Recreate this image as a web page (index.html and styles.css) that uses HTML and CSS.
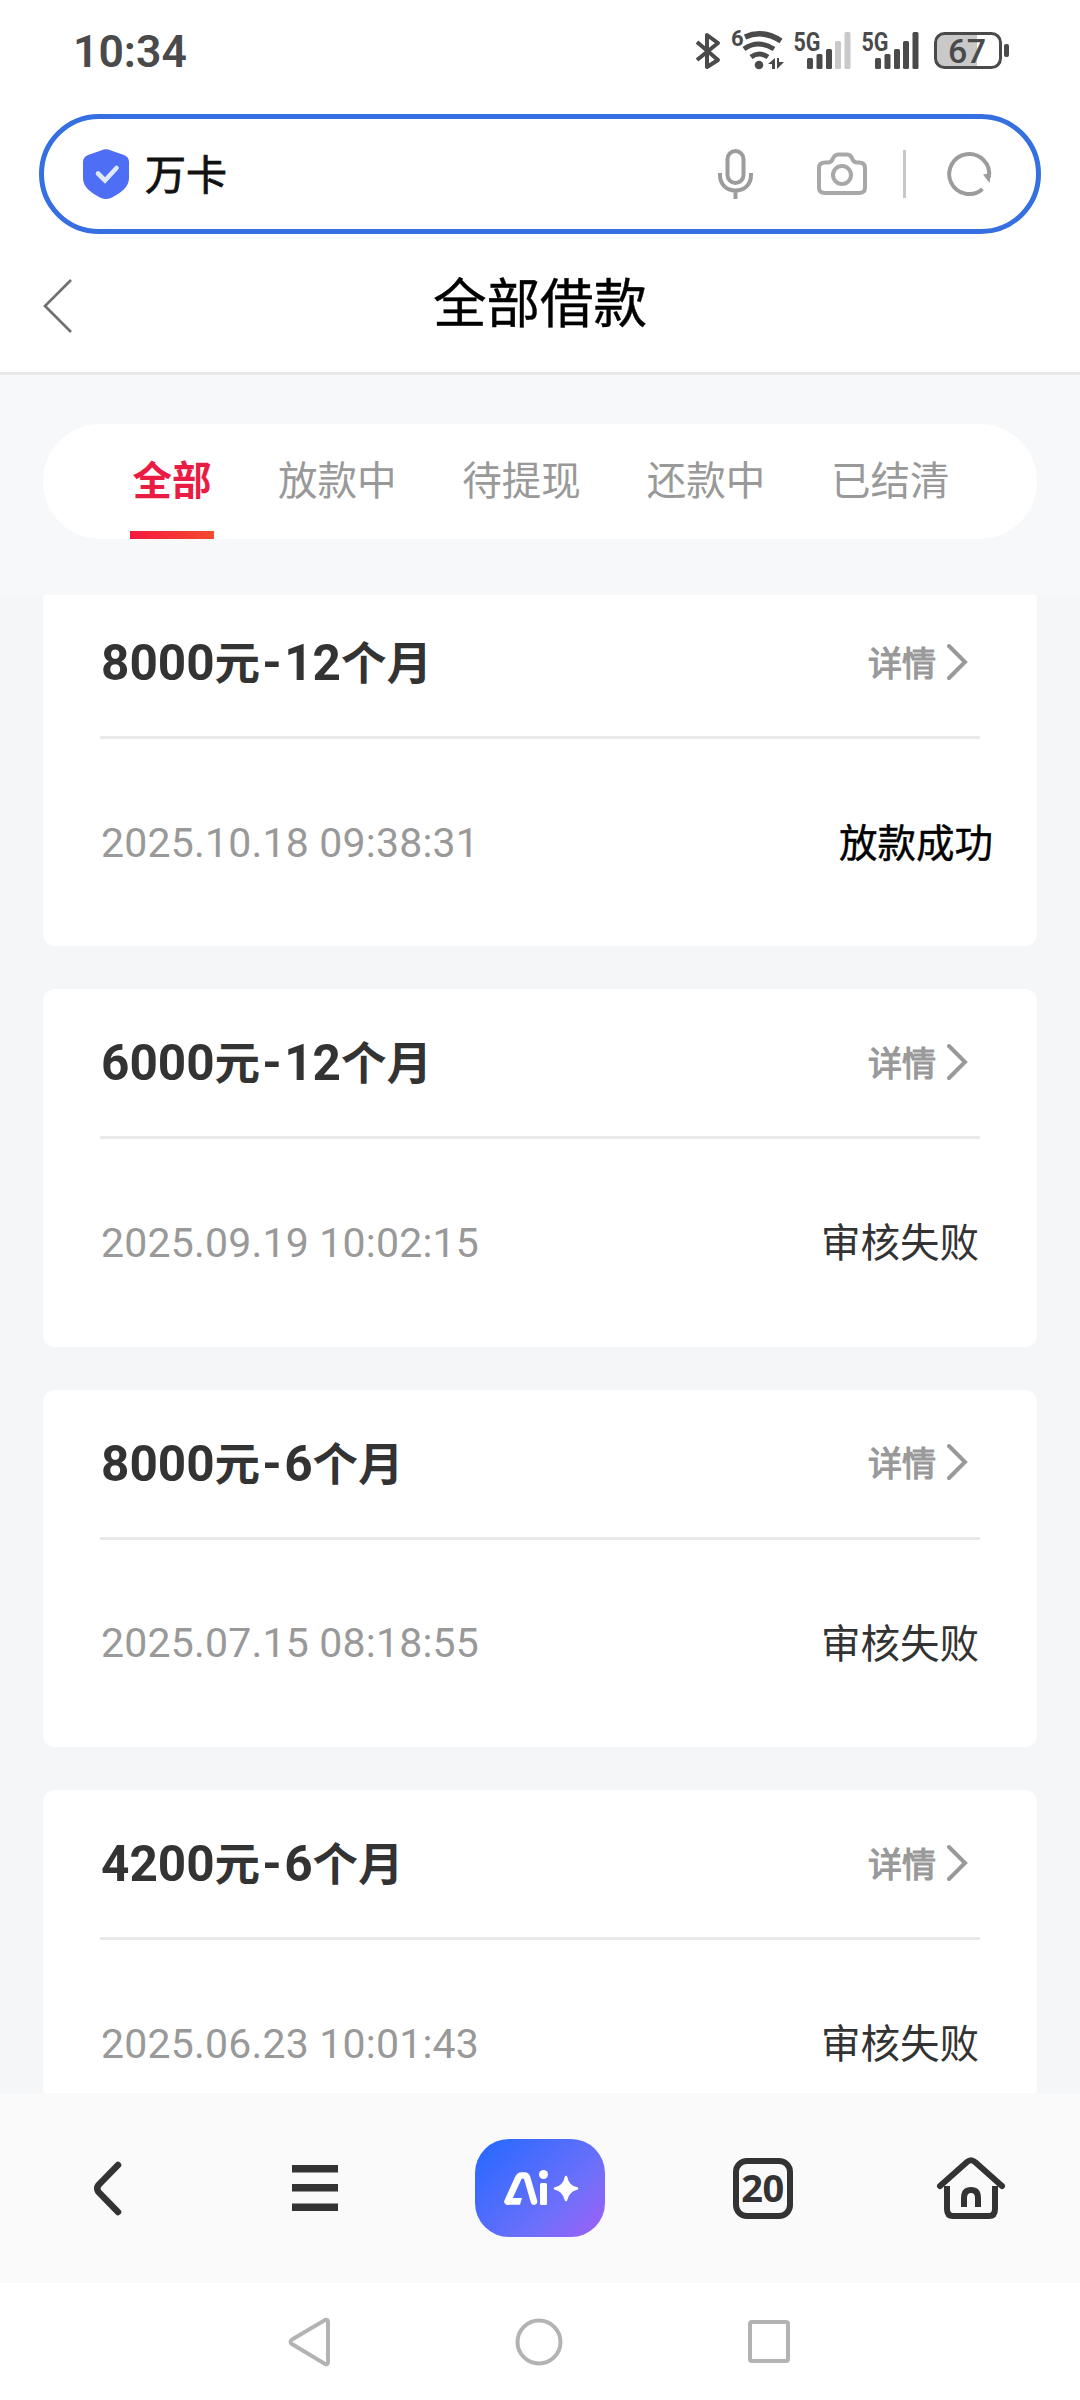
FILE: index.html
```html
<!DOCTYPE html>
<html lang="zh-CN">
<head>
<meta charset="utf-8">
<title>全部借款</title>
<link rel="stylesheet" href="styles.css">
</head>
<body>
<div class="screen">
  <header class="status-bar">
    <span class="clock">10:34</span>
    <svg class="status-icons" width="320" height="60" viewBox="692 20 320 60" fill="none" stroke="#4a4a4a">
      <path d="M697 42 718 60 707 67V35L718 43 697 60" stroke-width="4" stroke-linejoin="round"/>
      <text x="731" y="46" class="tiny">6</text>
      <g stroke-width="5">
        <path d="M745 37Q763 29 781 41" stroke-width="5.5"/>
        <path d="M744 49Q758 39 774 49"/>
        <path d="M751 57Q759 51 768 57"/>
      </g>
      <circle cx="759" cy="65" r="4.3" fill="#4a4a4a" stroke="none"/>
      <g fill="#4a4a4a" stroke="none">
        <path d="M768 64 775 58V69H772V64ZM777 58H779V62H784L777 69Z"/>
        <rect x="807" y="58" width="6" height="11" rx="1.5"/>
        <rect x="816.5" y="54" width="6" height="15" rx="1.5"/>
        <rect x="826" y="49" width="6" height="20" rx="1.5"/>
        <rect x="835" y="41" width="6" height="28" rx="1.5" fill="#c9c9c9"/>
        <rect x="844.5" y="32" width="6" height="37" rx="1.5" fill="#c9c9c9"/>
        <rect x="875" y="58" width="6" height="11" rx="1.5"/>
        <rect x="884.5" y="54" width="6" height="15" rx="1.5"/>
        <rect x="894" y="49" width="6" height="20" rx="1.5"/>
        <rect x="903" y="41" width="6" height="28" rx="1.5"/>
        <rect x="912.5" y="32" width="6" height="37" rx="1.5"/>
        <path d="M944 34H977V67H944Q936 67 936 58V43Q936 34 944 34Z" fill="#c9c9c9"/>
        <rect x="1004" y="44" width="5" height="13" rx="2"/>
      </g>
      <rect x="935.5" y="33.5" width="65" height="34" rx="9" stroke-width="3"/>
      <text x="793.5" y="50.5" class="net" textLength="27" lengthAdjust="spacingAndGlyphs">5G</text>
      <text x="861.5" y="50.5" class="net" textLength="27" lengthAdjust="spacingAndGlyphs">5G</text>
      <text x="948" y="63" class="level" textLength="38">67</text>
    </svg>
  </header>

  <div class="address-bar">
    <svg class="shield" width="46" height="50" viewBox="0 0 46 50">
      <path d="M18 1.5Q23-.8 28 1.5L41 6Q46 8 46 13V29C46 38 38 44 28 49Q23 51 18 49C8 44 0 38 0 29V13Q0 8 5 6Z" fill="#4d6ef5"/>
      <path d="m15 24.500 7 7L33.500 19" fill="none" stroke="#dfe8ff" stroke-width="4.6" stroke-linecap="round"/>
    </svg>
    <span class="site">万卡</span>
    <svg class="tools" width="280" height="56" viewBox="715 146 280 56" fill="none" stroke="#9c9c9c" stroke-width="4">
      <rect x="727.5" y="151" width="16" height="32" rx="8"/>
      <path d="M720 173V175C720 184 726 190.500 735.500 190.500S751 184 751 175V173M735.500 190V199"/>
      <path d="M825 162.500H828Q831 162.500 832.500 159.500 834.500 154.500 838 154.500H847Q851 154.500 852.500 159.500 854 162.500 857 162.500H859Q865 162.500 865 168V188Q865 193 859 193H825Q819 193 819 188V168Q819 162.500 825 162.500Z" stroke="#a8a8a8"/>
      <circle cx="842" cy="175" r="9" stroke="#a8a8a8"/>
      <path d="M904.500 150V198" stroke="#c8c8c8" stroke-width="3"/>
      <path d="M982.500 189A20 20 0 1 1 989 177"/>
      <path d="M983 174.500 991 173 989.500 183Z" fill="#9c9c9c" stroke="none"/>
    </svg>
  </div>

  <div class="page-header">
    <svg class="back" width="32" height="56" viewBox="0 0 32 56"><path d="M29 2 3 28 29 54" fill="none" stroke="#707070" stroke-width="2.7"/></svg>
    <h1>全部借款</h1>
  </div>

  <nav class="tabs">
    <span class="tab active">全部</span>
    <span class="tab">放款中</span>
    <span class="tab">待提现</span>
    <span class="tab">还款中</span>
    <span class="tab">已结清</span>
  </nav>

  <main class="list">
    <article class="card">
      <div class="card-head"><h2><b>8000</b>元<b class="dash">-</b><b>12</b>个月</h2><span class="detail">详情<svg width="22" height="38" viewBox="0 0 22 38"><path d="M2 3 18 19 2 35"/></svg></span></div>
      <div class="card-body"><time>2025.10.18 09:38:31</time><span class="state success">放款成功</span></div>
    </article>
    <article class="card">
      <div class="card-head"><h2><b>6000</b>元<b class="dash">-</b><b>12</b>个月</h2><span class="detail">详情<svg width="22" height="38" viewBox="0 0 22 38"><path d="M2 3 18 19 2 35"/></svg></span></div>
      <div class="card-body"><time>2025.09.19 10:02:15</time><span class="state">审核失败</span></div>
    </article>
    <article class="card">
      <div class="card-head"><h2><b>8000</b>元<b class="dash">-</b><b>6</b>个月</h2><span class="detail">详情<svg width="22" height="38" viewBox="0 0 22 38"><path d="M2 3 18 19 2 35"/></svg></span></div>
      <div class="card-body"><time>2025.07.15 08:18:55</time><span class="state">审核失败</span></div>
    </article>
    <article class="card">
      <div class="card-head"><h2><b>4200</b>元<b class="dash">-</b><b>6</b>个月</h2><span class="detail">详情<svg width="22" height="38" viewBox="0 0 22 38"><path d="M2 3 18 19 2 35"/></svg></span></div>
      <div class="card-body"><time>2025.06.23 10:01:43</time><span class="state">审核失败</span></div>
    </article>
  </main>

  <footer class="toolbar">
    <svg width="30" height="60" viewBox="0 0 30 60"><path d="M25 7 5.500 27Q3 30.500 5.500 34L25 54" fill="none" stroke="#333" stroke-width="6.5" stroke-linecap="round"/></svg>
    <svg class="menu" width="46" height="48" viewBox="0 0 46 48" fill="#333"><path d="M0 1H46V8.500H0ZM0 20H46V27.500H0ZM0 39.500H46V47H0Z"/></svg>
    <span class="ai">
      <svg width="78" height="40" viewBox="502 2168 78 40" fill="#fff">
        <path d="M508.500 2201.500 519.500 2177.500Q520.500 2175.500 522.500 2175.500H525.500Q527.500 2175.500 528 2177.500L535 2201.500" fill="none" stroke="#fff" stroke-width="6.6" stroke-linecap="round"/>
        <path d="M507 2204.800 509 2198H523L521 2204.800Z"/>
        <circle cx="544.5" cy="2174.5" r="4.5"/>
        <rect x="541" y="2183" width="7" height="22" rx="1.5"/>
        <path d="M567 2177Q569 2187 578 2188.500 569 2190.500 567 2200 565 2190.500 556 2188.500 565 2187 567 2177Z" stroke="#fff" stroke-width="2.5" stroke-linejoin="round"/>
      </svg>
    </span>
    <span class="count">20</span>
    <svg width="70" height="64" viewBox="936 2156 70 64" fill="none" stroke="#333" stroke-width="6">
      <path d="M940 2186 967 2162Q971 2158.500 975 2162L1002 2186" stroke-linecap="round"/>
      <path d="M947 2186V2209Q947 2216 953 2216H989Q995 2216 995 2209V2186"/>
      <path d="M964 2207V2198Q964 2190 971 2190T978 2198V2207"/>
    </svg>
  </footer>

  <div class="system-nav">
    <svg width="44" height="50" viewBox="0 0 44 50"><path d="M4 22.500 37 3Q40 2 40 5V45Q40 48 37 47L4 27Q1 25 4 22.500Z"/></svg>
    <svg width="50" height="50" viewBox="0 0 50 50"><circle cx="25" cy="25" r="21.5"/></svg>
    <svg width="46" height="46" viewBox="0 0 46 46"><rect x="4" y="3" width="38" height="39" rx="2"/></svg>
  </div>
</div>
</body>
</html>
```
FILE: styles.css
```css
* { box-sizing: border-box; }

body {
  margin: 0;
  background: #fff;
  font-family: "Noto Sans CJK SC", sans-serif;
}

svg { display: block; flex: none; }

h1, h2 { margin: 0; }

.screen {
  display: flex;
  flex-direction: column;
  width: 1080px;
  height: 2400px;
  overflow: hidden;
  background: #f7f8fa;
}

.status-bar {
  display: flex;
  flex: none;
  justify-content: space-between;
  align-items: flex-start;
  height: 114px;
  padding: 20px 68px 0 73px;
  background: #fff;
}

.clock {
  margin-top: 9px;
  font: 600 44.5px/46px Roboto, sans-serif;
  color: #4a4a4a;
}

.status-icons text {
  fill: #4a4a4a;
  stroke: none;
  font-family: Roboto, sans-serif;
  font-weight: 700;
}

.status-icons .tiny { font-size: 22px; }
.status-icons .net { font-size: 26px; }
.status-icons .level { font-size: 34px; font-weight: 500; }

.address-bar {
  display: flex;
  flex: none;
  align-items: center;
  height: 120px;
  margin: 0 39px;
  padding: 0 41px 0 39px;
  border: 5px solid #366fe2;
  border-radius: 60px;
  background: #fff;
  background-clip: padding-box;
  box-shadow: 0 0 0 200px #fff;
  clip-path: inset(0 -39px);
}

.site {
  margin: -4px 0 0 16px;
  font-size: 41px;
  line-height: 60px;
  color: #111;
  -webkit-text-stroke: 0.8px #111;
}

.tools { margin-left: auto; }

.page-header {
  display: grid;
  flex: none;
  grid-template-columns: 100px 1fr 100px;
  align-items: center;
  height: 141px;
  padding-bottom: 6px;
  border-bottom: 3px solid #e8e9ea;
  background: #fff;
}

.back { margin: 12px 0 0 42px; }

.page-header h1 {
  font-size: 53.5px;
  font-weight: 400;
  line-height: 80px;
  text-align: center;
  color: #000;
  -webkit-text-stroke: 0.4px #000;
}

.tabs {
  display: flex;
  flex: none;
  gap: 64.3px;
  height: 115px;
  margin: 49px 43px 56px;
  padding-left: 87px;
  border-radius: 58px;
  background: #fff;
}

.tab {
  width: 120px;
  font-size: 39.5px;
  line-height: 108px;
  text-align: center;
  white-space: nowrap;
  color: #999;
}

.tab.active {
  width: 84px;
  margin-right: -1px;
  border-bottom: 8px solid;
  border-image: linear-gradient(90deg, #f5173f, #f44b2e) 1;
  font-weight: 700;
  color: #ea1c43;
}

.list {
  display: flex;
  flex: 1;
  flex-direction: column;
  gap: 43px;
  min-height: 0;
  padding: 0 43px;
  overflow: hidden;
  background: #f5f6f8;
}

.card {
  flex: none;
  height: 357.5px;
  padding: 0 57px;
  border-radius: 12px;
  background: #fff;
}

.card:first-child {
  height: 351px;
  border-radius: 0 0 12px 12px;
}

.card-head {
  display: flex;
  justify-content: space-between;
  align-items: center;
  height: 150px;
  padding-bottom: 2px;
  border-bottom: 3px solid #e9e9e9;
}

.card:first-child .card-head { height: 144px; padding-bottom: 8px; }

.card h2 {
  display: flex;
  align-items: baseline;
  padding-left: 1px;
  font-size: 45.5px;
  font-weight: 700;
  line-height: 68px;
  color: #333;
}

.card h2 b {
  font-family: Roboto, sans-serif;
  font-size: 49.5px;
  font-weight: 700;
}

.card h2 .dash { width: 24px; text-align: center; }

.detail {
  display: flex;
  align-items: center;
  gap: 11px;
  margin-right: 11px;
  font-size: 34px;
  line-height: 50px;
  color: #999;
  -webkit-text-stroke: 1.2px #999;
}

.detail svg {
  fill: none;
  stroke: #999;
  stroke-width: 4;
  stroke-linecap: round;
}

.card-body {
  display: flex;
  justify-content: space-between;
  align-items: center;
  height: 207px;
}

time {
  padding-left: 1px;
  font-family: Roboto, sans-serif;
  font-size: 41px;
  letter-spacing: 0.2px;
  color: #999;
}

.state {
  margin: -5px 1px 0 0;
  font-size: 39.5px;
  line-height: 58px;
  color: #333;
}

.state.success {
  margin-right: -13px;
  font-size: 38.5px;
  color: #000;
  -webkit-text-stroke: 0.4px #000;
}

.toolbar {
  display: grid;
  flex: none;
  grid-template-columns: 216px 216px 216px 230px 186px;
  justify-items: center;
  align-items: center;
  height: 190px;
  background: #fafafa;
}

.menu { margin-left: -18px; }

.ai {
  display: flex;
  justify-content: center;
  align-items: center;
  width: 130px;
  height: 98px;
  margin-left: -1px;
  border-radius: 34px;
  background: linear-gradient(135deg, #2869ff 5%, #7070fa 68%, #a35df5);
}

.count {
  width: 60px;
  height: 61px;
  margin-left: -1px;
  border: 6px solid #333;
  border-radius: 14px;
  font: 700 38px/47px "Open Sans", sans-serif;
  letter-spacing: -0.5px;
  text-align: center;
  color: #333;
}

.system-nav {
  display: flex;
  flex: none;
  justify-content: center;
  align-items: center;
  gap: 182px;
  height: 117px;
  background: #fff;
}

.system-nav svg {
  fill: none;
  stroke: #b3b3b3;
  stroke-width: 4;
}
```
